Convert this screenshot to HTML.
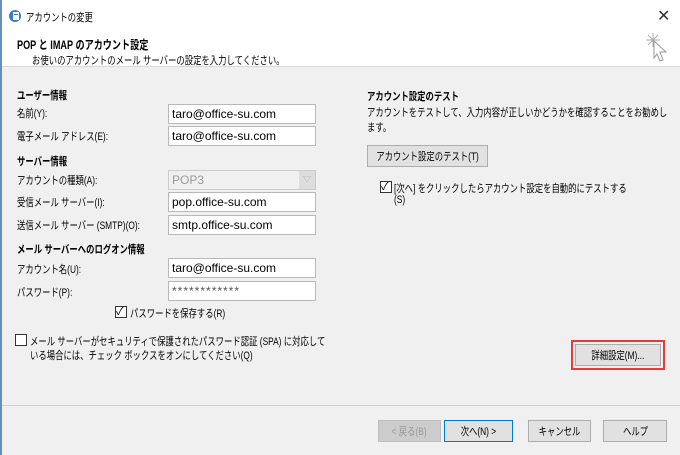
<!DOCTYPE html>
<html><head><meta charset="utf-8"><style>
*{margin:0;padding:0;box-sizing:border-box}
body{width:680px;height:455px;background:#f0f0f0;font-family:"Liberation Sans","Noto Sans CJK JP",sans-serif;font-size:11px;color:#000;position:relative;overflow:hidden}
.a{position:absolute;white-space:nowrap}
.s{transform:scaleX(.76);transform-origin:0 0}
.top{position:absolute;left:0;top:0;width:680px;height:67px;background:#fff;border-bottom:1px solid #d8d8d8}
.in{position:absolute;left:168px;width:148px;height:20px;background:#fff;border:1px solid #b8b8b8;padding:2px 3px;font-size:12px}
.b{font-weight:bold}
.btn{position:absolute;height:22px;background:#e1e1e1;border:1px solid #adadad;display:flex;justify-content:center;align-items:center;font-size:11px;white-space:nowrap}
.btn span{display:inline-block;transform:scaleX(.76);flex:none}
.cb{position:absolute;width:12px;height:12px;border:1px solid #333;background:#fff}
</style></head><body>
<div class="top"></div>
<div class="a" style="left:0;top:0;width:2px;height:455px;background:#6a8fb5"></div>
<svg class="a" style="left:8px;top:9px" width="14" height="14"><circle cx="7" cy="7" r="6" fill="#3a7bc8"/><rect x="5" y="3" width="6" height="8" fill="#fff"/><rect x="6" y="5" width="4" height="1" fill="#3a7bc8"/></svg>
<div class="a s" style="left:26px;top:9px">アカウントの変更</div>
<div class="a" style="left:657px;top:6px;font-size:16px;color:#333">✕</div>
<svg class="a" style="left:644px;top:32px" width="26" height="34"><g stroke="#aaa" stroke-width="1"><line x1="9" y1="1" x2="9" y2="15"/><line x1="2" y1="8" x2="16" y2="8"/><line x1="4" y1="3" x2="14" y2="13"/><line x1="14" y1="3" x2="4" y2="13"/></g><path d="M10 9 L22 20 L16 20 L19 28 L16 29 L13 22 L10 26 Z" fill="#fff" stroke="#999"/></svg>
<div class="a b s" style="left:17px;top:36px;font-size:12px">POP と IMAP のアカウント設定</div>
<div class="a s" style="left:32px;top:52px">お使いのアカウントのメール サーバーの設定を入力してください。</div>

<div class="a b s" style="left:17px;top:87px">ユーザー情報</div>
<div class="a s" style="left:17px;top:105px">名前(Y):</div>
<div class="in" style="top:104px">taro@office-su.com</div>
<div class="a s" style="left:17px;top:128px">電子メール アドレス(E):</div>
<div class="in" style="top:126px">taro@office-su.com</div>
<div class="a b s" style="left:17px;top:153px">サーバー情報</div>
<div class="a s" style="left:17px;top:172px">アカウントの種類(A):</div>
<div class="in" style="top:170px;background:#f0f0f0;border-color:#ccc;color:#999">POP3<span style="position:absolute;right:0;top:0;width:16px;height:18px;background:#ddd;color:#aaa;font-size:8px;text-align:center;line-height:18px">▽</span></div>
<div class="a s" style="left:17px;top:194px">受信メール サーバー(I):</div>
<div class="in" style="top:192px">pop.office-su.com</div>
<div class="a s" style="left:17px;top:217px">送信メール サーバー (SMTP)(O):</div>
<div class="in" style="top:215px">smtp.office-su.com</div>
<div class="a b s" style="left:17px;top:241px">メール サーバーへのログオン情報</div>
<div class="a s" style="left:17px;top:261px">アカウント名(U):</div>
<div class="in" style="top:258px">taro@office-su.com</div>
<div class="a s" style="left:17px;top:284px">パスワード(P):</div>
<div class="in" style="top:281px;color:#555;letter-spacing:1px">************</div>
<div class="cb" style="left:115px;top:306px"></div><div class="a" style="left:116px;top:303px">✓</div>
<div class="a s" style="left:130px;top:305px">パスワードを保存する(R)</div>
<div class="cb" style="left:15px;top:334px"></div>
<div class="a s" style="left:30px;top:333px">メール サーバーがセキュリティで保護されたパスワード認証 (SPA) に対応して</div>
<div class="a s" style="left:30px;top:347px">いる場合には、チェック ボックスをオンにしてください(Q)</div>

<div class="a b s" style="left:367px;top:88px">アカウント設定のテスト</div>
<div class="a s" style="left:367px;top:104px">アカウントをテストして、入力内容が正しいかどうかを確認することをお勧めし</div>
<div class="a s" style="left:367px;top:119px">ます。</div>
<div class="btn" style="left:367px;top:145px;width:121px"><span>アカウント設定のテスト(T)</span></div>
<div class="cb" style="left:380px;top:181px"></div><div class="a" style="left:381px;top:178px">✓</div>
<div class="a s" style="left:394px;top:180px">[次へ] をクリックしたらアカウント設定を自動的にテストする</div>
<div class="a s" style="left:394px;top:194px">(S)</div>

<div class="a" style="left:571px;top:340px;width:94px;height:30px;border:2px solid #e83a3a"></div>
<div class="btn" style="left:575px;top:344px;width:86px"><span>詳細設定(M)...</span></div>

<div class="a" style="left:2px;top:405px;width:678px;height:1px;background:#d0d0d0"></div>
<div class="btn" style="left:378px;top:420px;width:63px;color:#999;background:#ccc;border-color:#bfbfbf"><span>&lt; 戻る(B)</span></div>
<div class="btn" style="left:444px;top:420px;width:69px;border:1px solid #0078d7"><span>次へ(N) &gt;</span></div>
<div class="btn" style="left:528px;top:420px;width:63px"><span>キャンセル</span></div>
<div class="btn" style="left:603px;top:420px;width:64px"><span>ヘルプ</span></div>
</body></html>
